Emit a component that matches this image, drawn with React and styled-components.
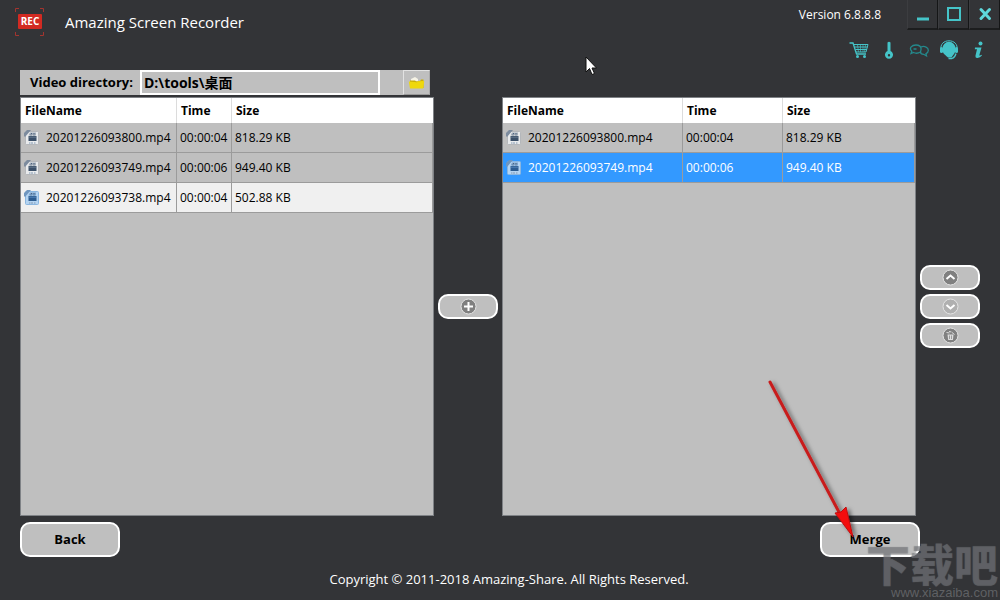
import React from 'react';
import styled, { createGlobalStyle, css } from 'styled-components';

const Global = createGlobalStyle`
  *, *::before, *::after { box-sizing: border-box; }
  body {
    margin: 0;
    background: #333437;
    color: #fff;
    font: 12px/16px "Open Sans", "Noto Sans CJK SC", sans-serif;
  }
  button, input { font: inherit; color: inherit; margin: 0; padding: 0; }
  button { cursor: pointer; }
  svg { display: block; }
`;

const Page = styled.div`
  position: relative;
  min-height: 100vh;
  display: flex;
  flex-direction: column;
  overflow: hidden;
`;

const Header = styled.header`
  display: flex;
  justify-content: space-between;
  height: 70px;
`;

const Brand = styled.div`
  display: flex;
  align-items: center;
  gap: 20px;
  height: 44px;
  padding-left: 14px;
`;

const Title = styled.h1`
  margin: 0;
  font-size: 15px;
  line-height: 20px;
  font-weight: 400;
`;

const HeaderSide = styled.div`
  display: flex;
  flex-direction: column;
  align-items: flex-end;
`;

const WindowBar = styled.div`
  display: flex;
  align-items: center;
  height: 30px;
`;

const Version = styled.span`
  margin-right: 26px;
`;

const WindowButton = styled.button`
  width: 31px;
  height: 30px;
  display: grid;
  place-items: center;
  background: #333437;
  border: 0;
  border-left: 1px solid #3c3d40;
  border-right: 1px solid #151617;
  border-bottom: 2px solid #1c1d1e;
`;

const Tools = styled.nav`
  display: flex;
  padding: 5px 6px 0 0;
`;

const ToolButton = styled.button`
  width: 30px;
  height: 30px;
  display: grid;
  place-items: center;
  border: 0;
  background: none;
`;

const Workspace = styled.main`
  flex: 1;
  display: grid;
  grid-template-columns: minmax(0, 1fr) 60px minmax(0, 1fr) 60px;
  grid-template-rows: 25px 1fr;
  gap: 2px 4px;
  padding: 0 20px;
`;

const Directory = styled.form`
  grid-column: 1 / -1;
  display: grid;
  grid-template-columns: minmax(0, 1fr) 60px minmax(0, 1fr) 60px;
  column-gap: 4px;
`;

const DirectoryBar = styled.div`
  display: flex;
  margin-right: 4px;
  background: #bfbfbf;
  color: #000;
  font-size: 13px;
  font-weight: 700;
`;

const DirectoryLabel = styled.label`
  width: 120px;
  padding-left: 10px;
  line-height: 25px;
`;

const DirectoryInput = styled.input`
  flex: 1;
  min-width: 0;
  margin-right: 23px;
  padding: 0 2px;
  border: 2px solid #fff;
  border-radius: 0;
  background: #bfbfbf;
  font-size: 14px;
`;

const BrowseButton = styled.button`
  width: 27px;
  display: grid;
  place-items: center;
  border: 1px solid #e2e2e2;
  border-right-color: #aaa;
  border-bottom-color: #999;
  background: #bfbfbf;
`;

const Panel = styled.section`
  border: 1px solid #7f8286;
  background: #bfbfbf;
  color: #000;
`;

const Table = styled.table`
  width: 100%;
  table-layout: fixed;
  border-collapse: separate;
  border-spacing: 0;
`;

const HeadCell = styled.th`
  height: 25px;
  padding: 0 4px;
  background: #fff;
  border-right: 1px solid #dcdcdc;
  text-align: left;
  font-weight: 700;
  &:last-child { border-right: 0; }
`;

const Cell = styled.td`
  height: 30px;
  padding: 0 3px;
  border-right: 1px solid #9b9b9b;
  border-bottom: 1px solid #9b9b9b;
  white-space: nowrap;
`;

const tones = {
  hover: css`background: #f0f0f0;`,
  selected: css`background: #3399ff; color: #fff;`,
};

const Row = styled.tr`
  ${(p) => tones[p.$tone]}
`;

const FileName = styled.span`
  display: flex;
  align-items: center;
  gap: 6px;
`;

const Stack = styled.div`
  display: flex;
  flex-direction: column;
  justify-content: center;
  gap: 4px;
`;

const PillButton = styled.button`
  height: 25px;
  display: grid;
  place-items: center;
  border: 2px solid #fff;
  border-radius: 10px;
  background: #bfbfbf;
`;

const Actions = styled.div`
  display: flex;
  justify-content: space-between;
  padding: 6px 80px 0 20px;
`;

const ActionButton = styled.button`
  width: 100px;
  height: 35px;
  padding-bottom: 2px;
  border: 2px solid #fff;
  border-radius: 10px;
  background: #bfbfbf;
  color: #000;
  font-size: 13px;
  font-weight: 700;
`;

const Footer = styled.footer`
  height: 43px;
  padding: 14px 0 0 18px;
  font-size: 13px;
  text-align: center;
`;

const Pointer = styled.svg`
  position: absolute;
  left: 585px;
  top: 56px;
  pointer-events: none;
`;

const Arrow = styled.svg`
  position: absolute;
  right: 136px;
  bottom: 56px;
  pointer-events: none;
`;

const Watermark = styled.div`
  position: absolute;
  right: 2px;
  bottom: 0;
  display: flex;
  flex-direction: column;
  align-items: flex-end;
  pointer-events: none;
`;

const WatermarkName = styled.span`
  font: 900 44px/46px "Noto Sans CJK SC", sans-serif;
  color: rgba(130, 132, 136, 0.32);
  text-shadow: 0 0 1px rgba(100, 102, 106, 0.6);
`;

const WatermarkSite = styled.span`
  font: 13px/14px "Liberation Sans", sans-serif;
  color: rgba(140, 142, 146, 0.5);
`;

const TEAL = '#45c4c8';

const RecLogo = () => (
  <svg width="31" height="30" viewBox="0 0 31 30" aria-hidden="true">
    <path d="M1.500 5V1.500H5M26 1.500h3.500V5M1.500 25v3.500H5M26 28.500h3.500V25" fill="none" stroke="#a3342f" />
    <rect x="4" y="7" width="24" height="15" rx="1" fill="#d22a22" />
    <text x="16" y="18" textAnchor="middle" fontFamily="Open Sans, sans-serif" fontWeight="700" fontSize="10" fill="#fff">REC</text>
  </svg>
);

const Minimize = () => (
  <svg width="16" height="16" viewBox="0 0 16 16"><path d="M2 11.500h12v3H2z" fill={TEAL} /></svg>
);
const Maximize = () => (
  <svg width="16" height="16" viewBox="0 0 16 16"><path d="M2 2h12v12H2z" fill="none" stroke={TEAL} strokeWidth="2" /></svg>
);
const Close = () => (
  <svg width="16" height="16" viewBox="0 0 16 16"><path d="M4 3.500l8.500 9M12.500 3.500L4 12.500" fill="none" stroke="#5ed8dc" strokeWidth="3" strokeLinecap="round" /></svg>
);

const Cart = () => (
  <svg width="20" height="18" viewBox="0 0 20 18" fill="none" stroke={TEAL}>
    <path d="M.5 2H4l3.500 11H17" strokeWidth="1.300" />
    <path d="M5 3.500h14l-2 7.500H7" />
    <path d="M5.500 6h13M6.500 8.500h11.500" />
    <path d="M8.500 4l1 7M11.500 4v7M14 4v7M16.500 4l-1 7" strokeWidth=".6" />
    <circle cx="8.500" cy="15.500" r="1.500" fill={TEAL} stroke="none" />
    <circle cx="15.500" cy="15.500" r="1.500" fill={TEAL} stroke="none" />
  </svg>
);
const Key = () => (
  <svg width="10" height="18" viewBox="0 0 10 18">
    <path fill={TEAL} fillRule="evenodd" d="M3.500 1.500Q5 0 6.500 1.500V10a4 4 0 1 1-3 0zM5 13a1.200 1.200 0 1 0 0 2.400A1.200 1.200 0 0 0 5 13z" />
  </svg>
);
const Chat = () => (
  <svg width="20" height="16" viewBox="0 0 20 16" fill="none" stroke="#24898c" strokeWidth="1.300">
    <path d="M11.500 10C9 11.500 6.500 11.500 4.500 10.500L2 11.500l.8-2.200C-.5 6 3 3 7 3c3 0 5.500 1.500 5 4.500-.1.900-.3 1.700-.5 2.500z" />
    <path d="M12 5c3.500-1.500 7.500.5 7.300 3.500-.1 1.500-.9 2.500-2.300 3.200l.5 2.300-2.800-1.700c-2 0-3.200-1-3.200-2.300M4.500 7h3" />
  </svg>
);
const Support = () => (
  <svg width="20" height="20" viewBox="0 0 20 20">
    <path d="M2 10C1 4 5 .8 10 .8S19 4 18 10" fill="none" stroke={TEAL} />
    <ellipse cx="10" cy="9" rx="6.800" ry="7.200" fill={TEAL} />
    <rect x="1" y="7" width="3" height="6" rx="1.500" fill={TEAL} />
    <rect x="16" y="7" width="3" height="6" rx="1.500" fill={TEAL} />
    <path d="M4.500 13q2.500 3 4.500 4.500h3.500l3-4.500z" fill={TEAL} />
    <path d="M9.500 18.500h3.500q3-1 4-5" fill="none" stroke={TEAL} strokeWidth="1.300" />
  </svg>
);
const Info = () => (
  <svg width="12" height="18" viewBox="0 0 12 18" fill={TEAL}>
    <circle cx="7.500" cy="2.500" r="2" />
    <path d="M2 6.500h6.500L6.300 14.200q-.1 1 1.900-.5l.8.900Q6.500 17.500 3.800 17 2 16.500 2.500 14.500L4 8.300H1.800z" />
  </svg>
);

const Folder = () => (
  <svg width="17" height="14" viewBox="0 0 17 14">
    <path d="M3 3l4-2 3 2v3H3z" fill="#f6f3e6" />
    <path d="M2 4.500h5l1 .8h4l1-1.800h2.500V12H2z" fill="#c9ae08" />
    <path d="M.8 5.500L9 6.200l1-1 6.200-.2-1 7.500H2z" fill="#efd80d" />
  </svg>
);

const VideoFile = ({ active }) => (
  <svg width="16" height="16" viewBox="0 0 16 16" aria-hidden="true">
    <rect x="1.500" y="1.500" width="13" height="13" rx="1" fill={active ? '#b4d4f2' : '#e8eaec'} stroke={active ? '#8ab6e0' : '#b4b7bb'} />
    <path d="M0 6V3l3-3h4L1 7z" fill={active ? '#6f96bf' : '#7c8b9e'} />
    <path d="M4.500 5.500L6 2.500h6v3z" fill={active ? '#7ba3cc' : '#a3adb9'} />
    <path d="M7 3.500h1M9.500 3.500h1M6.500 5h1M9.500 5h1" stroke="#4c637e" />
    <path d="M4.500 6h8v5h-8z" fill={active ? '#2c5c90' : '#3b5069'} />
    <path d="M5 7.200h7" stroke={active ? '#5585b8' : '#64788f'} />
    <path d="M5 13h1.500M7 13h2M10 13h1.500" stroke="#8299b2" />
  </svg>
);

const Disc = ({ faint, children }) => (
  <svg width="17" height="17" viewBox="0 0 17 17" fill="none" stroke="#fff" aria-hidden="true">
    <circle cx="8.500" cy="8.500" r="7.500" fill={faint ? '#b0b0b0' : '#808080'} stroke="#e4e4e4" />
    {children}
  </svg>
);

const FileTable = ({ label, widths, rows }) => (
  <Panel>
    <Table aria-label={label}>
      <colgroup>
        <col width={widths[0]} />
        <col width={widths[1]} />
        <col />
      </colgroup>
      <thead>
        <tr>
          <HeadCell scope="col">FileName</HeadCell>
          <HeadCell scope="col">Time</HeadCell>
          <HeadCell scope="col">Size</HeadCell>
        </tr>
      </thead>
      <tbody>
        {rows.map(([name, time, size, tone]) => (
          <Row key={name} $tone={tone}>
            <Cell><FileName><VideoFile active={Boolean(tone)} />{name}</FileName></Cell>
            <Cell>{time}</Cell>
            <Cell>{size}</Cell>
          </Row>
        ))}
      </tbody>
    </Table>
  </Panel>
);

const sourceFiles = [
  ['20201226093800.mp4', '00:00:04', '818.29 KB'],
  ['20201226093749.mp4', '00:00:06', '949.40 KB'],
  ['20201226093738.mp4', '00:00:04', '502.88 KB', 'hover'],
];
const mergeFiles = [
  ['20201226093800.mp4', '00:00:04', '818.29 KB'],
  ['20201226093749.mp4', '00:00:06', '949.40 KB', 'selected'],
];

const windowButtons = [['Minimize', Minimize], ['Maximize', Maximize], ['Close', Close]];
const tools = [['Buy', Cart], ['Register', Key], ['Feedback', Chat], ['Support', Support], ['About', Info]];

export default function App() {
  return (
    <Page>
      <Global />
      <Header>
        <Brand>
          <RecLogo />
          <Title>Amazing Screen Recorder</Title>
        </Brand>
        <HeaderSide>
          <WindowBar>
            <Version>Version 6.8.8.8</Version>
            {windowButtons.map(([label, Icon]) => (
              <WindowButton key={label} type="button" aria-label={label}><Icon /></WindowButton>
            ))}
          </WindowBar>
          <Tools aria-label="Tools">
            {tools.map(([label, Icon]) => (
              <ToolButton key={label} type="button" aria-label={label}><Icon /></ToolButton>
            ))}
          </Tools>
        </HeaderSide>
      </Header>

      <Workspace>
        <Directory onSubmit={(e) => e.preventDefault()}>
          <DirectoryBar>
            <DirectoryLabel htmlFor="directory">Video directory:</DirectoryLabel>
            <DirectoryInput id="directory" type="text" defaultValue={'D:\\tools\\桌面'} />
            <BrowseButton type="button" aria-label="Browse"><Folder /></BrowseButton>
          </DirectoryBar>
        </Directory>

        <FileTable label="Source videos" widths={[156, 55]} rows={sourceFiles} />
        <Stack>
          <PillButton type="button" aria-label="Add">
            <Disc><path d="M8.500 4v9M4 8.500h9" strokeWidth="2" /></Disc>
          </PillButton>
        </Stack>
        <FileTable label="Videos to merge" widths={[180, 100]} rows={mergeFiles} />
        <Stack>
          <PillButton type="button" aria-label="Move up">
            <Disc><path d="M4.500 10l4-3.500 4 3.500" strokeWidth="2" /></Disc>
          </PillButton>
          <PillButton type="button" aria-label="Move down">
            <Disc faint><path d="M4.500 7l4 3.500 4-3.500" strokeWidth="2" /></Disc>
          </PillButton>
          <PillButton type="button" aria-label="Delete">
            <Disc>
              <path d="M5.500 7.500h6l-.6 5.500H6.200z" fill="#dedede" stroke="none" />
              <path d="M7.500 8.500v3.500M9.500 8.500v3.500" stroke="#808080" strokeWidth=".7" />
              <path d="M4.500 5.500l3 .5M7 4.500l2.500.5M10 5.500l2.500 2" stroke="#dedede" />
            </Disc>
          </PillButton>
        </Stack>
      </Workspace>

      <Actions>
        <ActionButton type="button">Back</ActionButton>
        <ActionButton type="button">Merge</ActionButton>
      </Actions>
      <Footer>Copyright © 2011-2018 Amazing-Share. All Rights Reserved.</Footer>

      <Watermark>
        <WatermarkName>下载吧</WatermarkName>
        <WatermarkSite>www.xiazaiba.com</WatermarkSite>
      </Watermark>
      <Pointer width="12" height="20" viewBox="0 0 12 20" aria-hidden="true">
        <path d="M1 1v15l3.500-3.500L7 18.500l2.500-1L7 12h4.500z" fill="#fff" stroke="#111" />
      </Pointer>
      <Arrow width="104" height="168" viewBox="0 0 104 168" aria-hidden="true">
        <defs>
          <filter id="arrow-shadow" x="-20%" y="-20%" width="150%" height="150%">
            <feDropShadow dx="3" dy="2" stdDeviation="2" floodColor="#000" floodOpacity="0.500" />
          </filter>
        </defs>
        <g filter="url(#arrow-shadow)">
          <path d="M10 6L80 138" stroke="#c81e1e" strokeWidth="3" strokeLinecap="round" />
          <path d="M75 137l6-1 5-5 7 30z" fill="#f40c0c" stroke="#c01010" />
        </g>
      </Arrow>
    </Page>
  );
}
